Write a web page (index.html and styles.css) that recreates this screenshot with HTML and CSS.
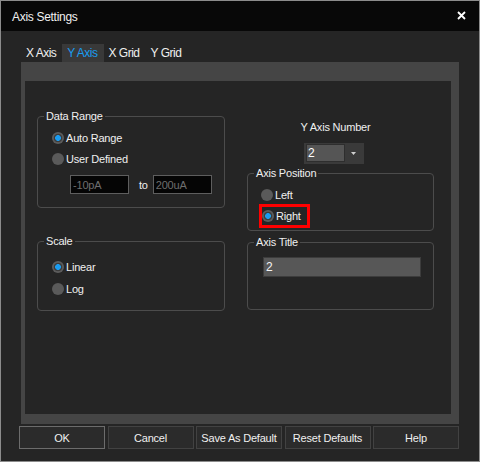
FILE: index.html
```html
<!DOCTYPE html>
<html>
<head>
<meta charset="utf-8">
<link rel="stylesheet" href="styles.css">
</head>
<body>
<div class="window">
  <div class="titlebar">
    <span class="title">Axis Settings</span>
    <svg class="close" width="9" height="9" viewBox="0 0 9 9"><path d="M1 1L8 8M8 1L1 8" stroke="#ffffff" stroke-width="1.8" fill="none"/></svg>
  </div>
  <div class="content">
    <div class="tabs">
      <span class="tab">X Axis</span>
      <span class="tab active">Y Axis</span>
      <span class="tab">X Grid</span>
      <span class="tab">Y Grid</span>
    </div>
    <div class="panel">
      <div class="page">
        <div class="col col-left">
          <fieldset class="group">
            <legend>Data Range</legend>
            <div class="gbody range-body">
              <div class="opt"><span class="radio on"></span><span>Auto Range</span></div>
              <div class="opt"><span class="radio"></span><span>User Defined</span></div>
              <div class="range-row">
                <input class="field" type="text" value="-10pA" readonly>
                <span class="to">to</span>
                <input class="field" type="text" value="200uA" readonly>
              </div>
            </div>
          </fieldset>
          <fieldset class="group scale">
            <legend>Scale</legend>
            <div class="gbody scale-body">
              <div class="opt tall"><span class="radio on"></span><span>Linear</span></div>
              <div class="opt tall"><span class="radio"></span><span>Log</span></div>
            </div>
          </fieldset>
        </div>
        <div class="col col-right">
          <div class="num-label">Y Axis Number</div>
          <div class="combo">
            <div class="combo-value">2</div>
            <svg class="combo-arrow" width="5" height="3" viewBox="0 0 5 3"><path d="M0 0H5L2.5 3Z" fill="#d0d0d0"/></svg>
          </div>
          <fieldset class="group position">
            <legend>Axis Position</legend>
            <div class="gbody position-body">
              <div class="opt short"><span class="radio"></span><span>Left</span></div>
              <div class="highlight"><div class="opt short"><span class="radio on"></span><span>Right</span></div></div>
            </div>
          </fieldset>
          <fieldset class="group axis-title">
            <legend>Axis Title</legend>
            <div class="gbody title-body">
              <input class="title-input" type="text" value="2" readonly>
            </div>
          </fieldset>
        </div>
      </div>
    </div>
    <div class="buttons">
      <button class="btn default">OK</button>
      <button class="btn">Cancel</button>
      <button class="btn">Save As Default</button>
      <button class="btn">Reset Defaults</button>
      <button class="btn">Help</button>
    </div>
  </div>
</div>
</body>
</html>
```
FILE: styles.css
```css
* { box-sizing: border-box; }
html, body { margin: 0; padding: 0; }
body {
  background: #252525;
  font-family: "Liberation Sans", Arial, sans-serif;
  font-size: 11px;
  letter-spacing: -0.2px;
  color: #f0f0f0;
}
.window {
  width: 480px;
  height: 462px;
  border: 1px solid #8c8c8c;
  background: #252525;
}
.titlebar {
  height: 30px;
  background: #080808;
  display: flex;
  align-items: center;
  justify-content: space-between;
  padding: 2px 13px 0 11px;
  font-size: 12px;
  letter-spacing: -0.3px;
}
.close { display: block; margin-top: -4px; }
.content { padding: 13px 20px 0 18px; }
.tabs {
  display: flex;
  height: 18px;
  margin-left: 2px;
  font-size: 12px;
  letter-spacing: -0.5px;
}
.tab { padding: 0 6px 0 5px; line-height: 18px; }
.tab.active { background: #393939; color: #1a9cf0; }
.panel {
  margin-left: 2px;
  background: #454545;
  height: 362px;
  padding: 19px 8px 10px 4px;
}
.page {
  background: #252525;
  height: 100%;
  display: grid;
  grid-template-columns: 188px 187px;
  column-gap: 22px;
  padding-left: 12px;
  align-items: start;
}
.col-left { padding-top: 28px; }
.col-right { padding-top: 39px; }
.group {
  border: 1px solid #4c4c4c;
  border-radius: 4px;
  margin: 0;
  padding: 0;
  min-width: 0;
}
.group legend {
  margin-left: 6px;
  padding: 0 2px;
  line-height: 14px;
}
.opt { display: flex; align-items: center; gap: 2px; height: 21px; }
.opt.tall { height: 22px; }
.opt.short { height: 18px; }
.radio {
  flex: none;
  width: 12px;
  height: 12px;
  border-radius: 50%;
  background: #5a5a5a;
}
.radio.on {
  background: radial-gradient(circle, #1a9cf0 0 2.6px, #3c3c3c 3.2px 4px, #5c5c5c 4.6px);
}
.range-body { padding: 4px 0 13px 14px; }
.range-row { display: flex; align-items: center; margin-top: 6px; padding-left: 18px; }
.field {
  width: 59px;
  height: 19px;
  margin: 0;
  background: #050505;
  border: 1px solid #5e5e5e;
  color: #6e6e6e;
  padding: 0 0 0 2px;
  font: inherit;
  letter-spacing: inherit;
  outline: none;
}
.to { margin: 0 5px 0 10px; }
.scale { margin-top: 26px; }
.scale-body { padding: 8px 0 10px 14px; }
.num-label { margin-right: 10px; text-align: center; line-height: 14px; }
.combo {
  width: 60px;
  height: 21px;
  margin: 9px 0 0 57px;
  background: #3a3a3a;
  display: flex;
  align-items: flex-start;
  padding: 1px 2px;
}
.combo-value {
  width: 39px;
  height: 18px;
  background: #555555;
  border: 1px solid #2e2e2e;
  line-height: 16px;
  padding-left: 1px;
  color: #ffffff;
  font-size: 12px;
}
.combo-arrow { display: block; margin: 8px 0 0 6px; }
.position { margin-top: 2px; }
.position-body { padding: 6px 0 2px 13px; }
.highlight {
  display: inline-block;
  margin-left: -2px;
  border: 3px solid #ff0000;
  padding-right: 6px;
}
.axis-title { margin-top: 4px; }
.title-body { padding: 8px 0 32px 15px; }
.title-input {
  display: block;
  width: 158px;
  height: 20px;
  margin: 0;
  background: #575757;
  border: 1px solid #3c3c3c;
  color: #f4f4f4;
  padding: 0 0 0 2px;
  font: inherit;
  font-size: 12px;
  outline: none;
}
.buttons { display: flex; gap: 2.5px; margin-top: 2px; }
.btn {
  width: 86px;
  height: 23px;
  padding: 0;
  background: #2b2b2b;
  border: 1px solid #424242;
  color: #f0f0f0;
  font: inherit;
  letter-spacing: inherit;
}
.btn.default { border-color: #6c6c6c; }
```
